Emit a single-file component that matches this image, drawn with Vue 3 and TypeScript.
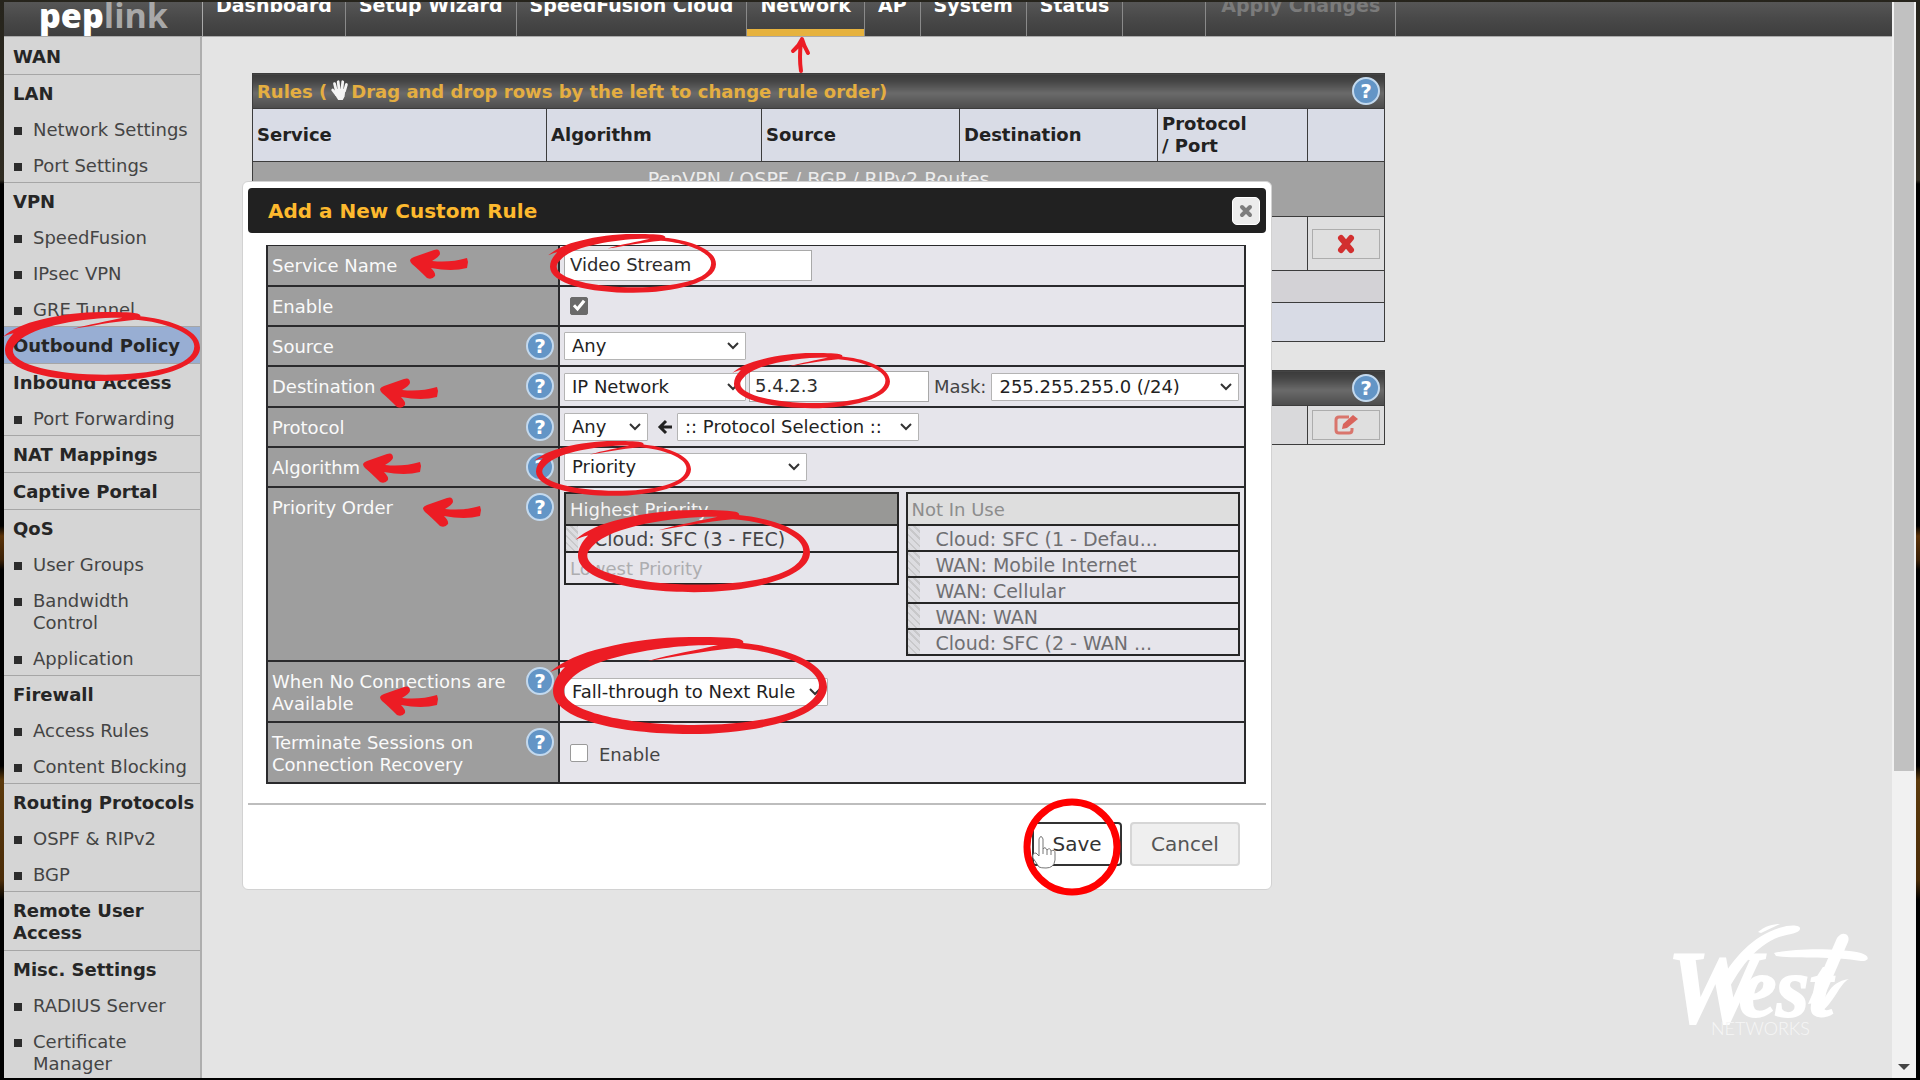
<script setup lang="ts">
import { ref } from 'vue'

interface MenuGroup {
  title: string
  active?: boolean
  items?: string[]
}

const menu: MenuGroup[] = [
  { title: 'WAN' },
  { title: 'LAN', items: ['Network Settings', 'Port Settings'] },
  { title: 'VPN', items: ['SpeedFusion', 'IPsec VPN', 'GRE Tunnel'] },
  { title: 'Outbound Policy', active: true },
  { title: 'Inbound Access', items: ['Port Forwarding'] },
  { title: 'NAT Mappings' },
  { title: 'Captive Portal' },
  { title: 'QoS', items: ['User Groups', 'Bandwidth Control', 'Application'] },
  { title: 'Firewall', items: ['Access Rules', 'Content Blocking'] },
  { title: 'Routing Protocols', items: ['OSPF & RIPv2', 'BGP'] },
  { title: 'Remote User Access' },
  { title: 'Misc. Settings', items: ['RADIUS Server', 'Certificate Manager'] },
]

const tabs = ['Dashboard', 'Setup Wizard', 'SpeedFusion Cloud', 'Network', 'AP', 'System', 'Status']
const activeTab = 'Network'

const unused = [
  'Cloud: SFC (1 - Defau...',
  'WAN: Mobile Internet',
  'WAN: Cellular',
  'WAN: WAN',
  'Cloud: SFC (2 - WAN ...',
]

const serviceName = ref('Video Stream')
const address = ref('5.4.2.3')
const enabled = ref(true)
const terminate = ref(false)

// Hand-drawn markers laid over the screen
const loops = [
  { x: 5, y: 312, w: 195 },
  { x: 550, y: 234, w: 166 },
  { x: 734, y: 353, w: 156 },
  { x: 536, y: 441, w: 155 },
  { x: 578, y: 510, w: 232 },
  { x: 553, y: 637, w: 274 },
]
const arrows = [
  { x: 410, y: 249 },
  { x: 380, y: 378 },
  { x: 363, y: 453 },
  { x: 423, y: 497 },
  { x: 380, y: 686 },
]
</script>

<template>
  <div class="screen">
    <div class="window">
      <div class="page">
        <header class="topbar">
          <a class="brand" href="#"><b>pep</b><span>link</span></a>
          <nav class="tabs">
            <a v-for="t in tabs" :key="t" href="#" :class="{ active: t === activeTab }">{{ t }}</a>
            <span class="spacer"></span>
            <a href="#" class="disabled">Apply Changes</a>
          </nav>
        </header>

        <div class="body">
          <aside class="sidebar">
            <section v-for="g in menu" :key="g.title" :class="{ active: g.active, lone: !g.items }">
              <a class="head" href="#">{{ g.title }}</a>
              <ul v-if="g.items">
                <li v-for="i in g.items" :key="i"><a href="#">{{ i }}</a></li>
              </ul>
            </section>
          </aside>

          <main class="main">
            <table class="rules">
              <colgroup>
                <col class="c-service" /><col class="c-algo" /><col class="c-addr" /><col class="c-addr" />
                <col class="c-proto" /><col class="c-act" />
              </colgroup>
              <thead>
                <tr class="bar">
                  <th colspan="6">
                    <div class="bar-row">
                      <span class="bar-text">Rules (<svg class="hand" viewBox="0 0 20 24" aria-hidden="true">
                        <g fill="none" stroke="#f4f4f4" stroke-width="3" stroke-linecap="round">
                          <path d="M6 13 4 5M9 12 8 3M12 12 13 3M15 13 17 6M6 17 2 12" />
                        </g>
                        <path d="M5 11 16 11 15 19 13 23H8L5 18Z" fill="#f4f4f4" />
                      </svg>Drag and drop rows by the left to change rule order)</span>
                      <button type="button" class="help" aria-label="Help">?</button>
                    </div>
                  </th>
                </tr>
                <tr class="cols">
                  <th>Service</th><th>Algorithm</th><th>Source</th><th>Destination</th><th>Protocol<br />/ Port</th><th></th>
                </tr>
              </thead>
              <tbody>
                <tr class="routes"><td colspan="6">PepVPN / OSPF / BGP / RIPv2 Routes</td></tr>
                <tr class="entry">
                  <td></td><td></td><td></td><td></td><td></td>
                  <td class="act">
                    <button type="button" class="tool" aria-label="Delete rule">
                      <svg width="20" height="20" viewBox="0 0 20 20"><path d="M5 4 15 16M15 4 5 16" stroke="#d22f2f" stroke-width="6" stroke-linecap="round" /></svg>
                    </button>
                  </td>
                </tr>
                <tr class="default"><td colspan="6"></td></tr>
                <tr class="add"><td colspan="6"></td></tr>
              </tbody>
            </table>

            <table class="rules">
              <colgroup>
                <col class="c-service" /><col class="c-algo" /><col class="c-addr" /><col class="c-addr" />
                <col class="c-proto" /><col class="c-act" />
              </colgroup>
              <tbody>
                <tr class="bar">
                  <th colspan="6">
                    <div class="bar-row">
                      <span></span>
                      <button type="button" class="help" aria-label="Help">?</button>
                    </div>
                  </th>
                </tr>
                <tr class="expert">
                  <td colspan="5"></td>
                  <td class="act">
                    <button type="button" class="tool" aria-label="Edit">
                      <svg width="24" height="22" viewBox="0 0 24 22" fill="none">
                        <path d="M15 3H5Q2 3 2 6V16Q2 19 5 19H15Q18 19 18 16V14" stroke="#d9756c" stroke-width="3" />
                        <path d="M8 15 9 10 19 1 24 5 13 14Z" fill="#d9645c" />
                      </svg>
                    </button>
                  </td>
                </tr>
              </tbody>
            </table>

            <div class="watermark">
              <svg viewBox="0 0 210 120" aria-label="West Networks">
                <text class="script"><tspan class="cap-w" x="0" y="98">W</tspan><tspan x="72" y="92">est</tspan></text>
                <g fill="#fff">
                  <path d="M50 62C66 34 86 12 112 4C124 0 134 1 133 5C133 9 122 10 112 13C88 22 72 44 56 76Z" />
                  <path d="M91 8C98 2 106 0 113 0L94 9Z" />
                  <path d="M107 29C128 24 172 24 194 29C203 32 203 37 194 37C166 32 130 35 109 32Z" />
                  <path d="M148 88C160 76 160 58 182 55C172 60 168 78 152 90Z" />
                  <path d="M141 80 170 14C175 6 184 10 181 18L155 78Z" />
                </g>
                <text class="sub" x="44" y="111">NETWORKS</text>
              </svg>
            </div>

            <form class="dialog" role="dialog" aria-labelledby="dlg-title" @submit.prevent>
              <div class="dlg-head">
                <h2 id="dlg-title">Add a New Custom Rule</h2>
                <button type="button" class="close" aria-label="Close">
                  <svg width="14" height="14" viewBox="0 0 14 14"><path d="M3 3 11 11M11 3 3 11" stroke="#7d7d7d" stroke-width="4" stroke-linecap="round" /></svg>
                </button>
              </div>

              <div class="fields">
                <div class="row">
                  <div class="label"><label for="svc">Service Name</label></div>
                  <div class="value"><input id="svc" v-model="serviceName" type="text" class="text wide" /></div>
                </div>
                <div class="row">
                  <div class="label"><label for="en">Enable</label></div>
                  <div class="value"><input id="en" v-model="enabled" type="checkbox" class="check" /></div>
                </div>
                <div class="row">
                  <div class="label"><label for="src">Source</label><button type="button" class="help" aria-label="Help">?</button></div>
                  <div class="value">
                    <span class="select w-type"><select id="src"><option>Any</option></select><svg viewBox="0 0 12 8"><path d="M1 1 6 6 11 1" /></svg></span>
                  </div>
                </div>
                <div class="row">
                  <div class="label"><label for="dst">Destination</label><button type="button" class="help" aria-label="Help">?</button></div>
                  <div class="value">
                    <span class="select w-type"><select id="dst"><option>IP Network</option></select><svg viewBox="0 0 12 8"><path d="M1 1 6 6 11 1" /></svg></span>
                    <input v-model="address" type="text" class="text addr" aria-label="Network address" />
                    <label for="mask" class="mask">Mask:</label>
                    <span class="select w-mask"><select id="mask"><option>255.255.255.0 (/24)</option></select><svg viewBox="0 0 12 8"><path d="M1 1 6 6 11 1" /></svg></span>
                  </div>
                </div>
                <div class="row">
                  <div class="label"><label for="proto">Protocol</label><button type="button" class="help" aria-label="Help">?</button></div>
                  <div class="value">
                    <span class="select w-any"><select id="proto"><option>Any</option></select><svg viewBox="0 0 12 8"><path d="M1 1 6 6 11 1" /></svg></span>
                    <svg class="left" width="16" height="16" viewBox="0 0 16 16" aria-hidden="true"><path d="M9 2 3 8 9 14M3 8H15" fill="none" stroke="#222" stroke-width="3" /></svg>
                    <span class="select w-proto"><select aria-label="Protocol selection"><option>:: Protocol Selection ::</option></select><svg viewBox="0 0 12 8"><path d="M1 1 6 6 11 1" /></svg></span>
                  </div>
                </div>
                <div class="row">
                  <div class="label"><label for="algo">Algorithm</label><button type="button" class="help" aria-label="Help">?</button></div>
                  <div class="value">
                    <span class="select w-algo"><select id="algo"><option>Priority</option></select><svg viewBox="0 0 12 8"><path d="M1 1 6 6 11 1" /></svg></span>
                  </div>
                </div>
                <div class="row order">
                  <div class="label"><span>Priority Order</span><button type="button" class="help" aria-label="Help">?</button></div>
                  <div class="value">
                    <ul class="list used">
                      <li class="cap">Highest Priority</li>
                      <li class="item">Cloud: SFC (3 - FEC)</li>
                      <li class="low">Lowest Priority</li>
                    </ul>
                    <ul class="list unused">
                      <li class="cap">Not In Use</li>
                      <li v-for="u in unused" :key="u" class="item">{{ u }}</li>
                    </ul>
                  </div>
                </div>
                <div class="row tall">
                  <div class="label"><label for="noconn">When No Connections are Available</label><button type="button" class="help" aria-label="Help">?</button></div>
                  <div class="value">
                    <span class="select w-fall"><select id="noconn"><option>Fall-through to Next Rule</option></select><svg viewBox="0 0 12 8"><path d="M1 1 6 6 11 1" /></svg></span>
                  </div>
                </div>
                <div class="row tall">
                  <div class="label"><span>Terminate Sessions on Connection Recovery</span><button type="button" class="help" aria-label="Help">?</button></div>
                  <div class="value">
                    <label class="tick"><input v-model="terminate" type="checkbox" class="check" /><span>Enable</span></label>
                  </div>
                </div>
              </div>

              <div class="dlg-foot">
                <button type="submit" class="btn save">Save</button>
                <button type="button" class="btn cancel">Cancel</button>
              </div>
            </form>
          </main>
        </div>
      </div>
      <div class="scrollbar"><div class="thumb"></div><div class="down"></div></div>
    </div>

    <svg class="marks" width="1920" height="1080" viewBox="0 0 1920 1080" aria-hidden="true">
      <defs>
        <path
          id="loop"
          fill-rule="evenodd"
          d="M-3 35C10 24 28 16 50 11C78 4 106 0 137 0C155 0 175 0 186 2C190 3 191 5 190 6C222 9 274 22 274 50C274 80 205 97 137 97C65 97 0 82 0 54C0 46 4 38 12 30C6 31 2 33-3 35ZM11 54C11 74 72 88 141 88C205 88 266 76 266 48C266 30 225 14 183 11C150 14 120 20 95 24C118 17 145 13 165 8C120 7 40 18 18 42C13 47 11 50 11 54Z"
        />
        <path id="arrow" d="M0 11Q1 9 4 8L24 1Q30-1 30 5Q29 8 22 12Q40 14 57 9L58 13 57 19Q42 23 21 19Q26 24 25 27Q22 31 17 29Q8 20 2 15Q0 13 0 11Z" />
      </defs>
      <g fill="#ec1c24">
        <use v-for="(l, i) in loops" :key="'l' + i" href="#loop" :transform="`translate(${l.x} ${l.y}) scale(${l.w / 274})`" />
        <use v-for="(a, i) in arrows" :key="'a' + i" href="#arrow" :x="a.x" :y="a.y" />
      </g>
      <path d="M801 71Q799 58 801 42M793 51Q799 46 802 39Q804 46 808 53" fill="none" stroke="#ec1c24" stroke-width="4" stroke-linecap="round" stroke-linejoin="round" />
      <path d="M1039 867 1033 858Q1032 853 1036 853L1039 856V839Q1041 834 1043 839V849Q1045 846 1047 850Q1050 847 1051 851Q1055 849 1055 853V860Q1054 868 1046 868Q1041 868 1039 867Z" fill="#fff" stroke="#777" />
      <path d="M1043 849V854M1047 850V855M1051 851V855" stroke="#777" />
      <circle cx="1072" cy="847" r="45" fill="none" stroke="#f00" stroke-width="7" />
    </svg>
  </div>
</template>

<style>
body {
  margin: 0;
  background: #000;
}
</style>

<style scoped>
* {
  box-sizing: border-box;
}
.screen {
  position: relative;
  height: 100vh;
  overflow: hidden;
  padding: 2px 4px;
  background: linear-gradient(180deg, #26241c 0, #302c22 180px, #000 184px, #000 526px, #5a3208 536px, #3a2006 560px, #000 570px, #000 766px, #5c3a0c 780px, #4a2c08 880px, #000 900px);
  font: 18px/22px "DejaVu Sans", Verdana, sans-serif;
  color: #444;
}
.window {
  display: flex;
  height: 100%;
  background: #e4e4e4;
  overflow: hidden;
}
.page {
  flex: 1;
  min-width: 0;
  display: flex;
  flex-direction: column;
}
a {
  color: inherit;
  text-decoration: none;
}
button,
input,
select {
  font: inherit;
  margin: 0;
}
ul {
  list-style: none;
  margin: 0;
  padding: 0;
}

/* top bar: scrolled partly out of view */
.topbar {
  display: flex;
  align-items: flex-end;
  flex: none;
  height: 35px;
  overflow: hidden;
  background: linear-gradient(#565656, #484848 50%, #3e3e3e);
  border-bottom: 1px solid #aaa;
}
.brand {
  flex: none;
  width: 198px;
  padding-left: 35px;
  font: 700 34px/42px "Open Sans", sans-serif;
  color: #fff;
}
.brand span {
  color: #a8a8a8;
}
.tabs {
  display: flex;
  flex: none;
  height: 62px;
  border-left: 1px solid #aaa;
  font-size: 19px;
  font-weight: 700;
  color: #fff;
}
.tabs > * {
  display: flex;
  align-items: center;
  padding: 0 13px;
  border-right: 1px solid #8a8a8a;
}
.tabs .active {
  box-shadow: inset 0 -7px #e6b23e;
}
.tabs .spacer {
  width: 83px;
}
.tabs .disabled {
  color: #7b7b7b;
  padding: 0 15px;
}

.body {
  display: flex;
  flex: 1;
  min-height: 0;
}
.sidebar {
  flex: none;
  width: 198px;
  padding-top: 1px;
  overflow: hidden;
  background: #d5d5d5;
  border-right: 2px solid #aeaeae;
}
.sidebar section {
  box-shadow: inset 0 -1px #a6a6a6;
}
.sidebar .head {
  display: block;
  padding: 8px 2px 6px 9px;
  font-weight: 700;
  color: #262626;
}
.sidebar .lone .head {
  padding-bottom: 7px;
}
.sidebar .active {
  background: #98aed3;
}
.sidebar li {
  position: relative;
  padding: 8px 24px 6px 29px;
}
.sidebar li a {
  display: block;
  margin-right: -24px;
  padding-right: 12px;
}
.sidebar li::before {
  content: "";
  position: absolute;
  left: 10px;
  top: 16px;
  width: 8px;
  height: 8px;
  background: #2c2c2c;
}

.main {
  position: relative;
  flex: 1;
  min-width: 0;
  padding: 36px 50px;
}
.rules {
  width: 100%;
  max-width: 1133px;
  table-layout: fixed;
  border-collapse: collapse;
  margin-bottom: 28px;
}
.rules th,
.rules td {
  padding: 0 4px;
  border: 1px solid #3c3c3c;
  text-align: left;
}
.c-service { width: 26%; }
.c-algo { width: 19%; }
.c-addr { width: 198px; }
.c-proto { width: 150px; }
.c-act { width: 77px; }
.bar th {
  height: 35px;
  background: linear-gradient(#3b3b3b, #454545 20%, #6a6a6a 55%, #4c4c4c);
  color: #e4ae41;
}
.bar-row {
  display: flex;
  align-items: center;
  justify-content: space-between;
}
.hand {
  width: 20px;
  height: 22px;
  margin: 0 1px 0 3px;
  vertical-align: -3px;
}
.cols th {
  height: 53px;
  background: #d9dce6;
  color: #222;
}
.routes td {
  height: 55px;
  padding-top: 6px;
  background: #a2a2a2;
  color: #ececec;
  font-size: 19px;
  text-align: center;
  vertical-align: top;
}
.entry td { height: 54px; background: #dbdbdd; }
.default td { height: 32px; background: #d3d2d6; }
.add td { height: 39px; background: #d8dbe5; }
.expert td { height: 39px; background: #d9d9db; }
.rules .act {
  background: #dededf;
}
.tool {
  display: flex;
  align-items: center;
  justify-content: center;
  width: 100%;
  height: 30px;
  padding: 0;
  border: 1px solid #adadad;
  background: #dfdfdf;
}
.help {
  display: flex;
  align-items: center;
  justify-content: center;
  flex: none;
  width: 28px;
  height: 28px;
  padding: 0;
  border: 2px solid #c3d9ee;
  border-radius: 50%;
  background: #6395c6;
  color: #fff;
  font-size: 20px;
  font-weight: 700;
}

.watermark {
  position: absolute;
  right: 0;
  bottom: 34px;
  width: 225px;
}
.watermark svg {
  display: block;
  width: 210px;
  height: 120px;
  overflow: visible;
}
.script {
  font: italic 700 84px "Liberation Serif", serif;
  fill: #fff;
  stroke: #fff;
  stroke-width: 2px;
}
.cap-w {
  font-size: 104px;
}
.sub {
  font: 300 18px Lato, sans-serif;
  fill: #f6f6f6;
}

.dialog {
  position: absolute;
  left: 40px;
  top: 144px;
  width: 1030px;
  max-width: 100%;
  padding: 6px 5px;
  border: 1px solid #d2d2d2;
  border-radius: 6px;
  background: #fff;
}
.dlg-head {
  display: flex;
  align-items: center;
  justify-content: space-between;
  height: 45px;
  padding: 0 6px 0 20px;
  border-radius: 4px;
  background: #212121;
}
.dlg-head h2 {
  margin: 0;
  font-size: 20px;
  color: #fdb92e;
}
.close {
  display: flex;
  align-items: center;
  justify-content: center;
  width: 28px;
  height: 28px;
  padding: 0;
  border: 1px solid #fff;
  border-radius: 5px;
  background: #ececec;
}
.fields {
  margin: 12px 20px 0 18px;
  border: 2px solid #2a2a2c;
  border-top-width: 1px;
  border-bottom: 0;
}
.row {
  display: flex;
  border-bottom: 2px solid #2a2a2c;
}
.label {
  display: flex;
  justify-content: space-between;
  align-items: flex-start;
  flex: none;
  width: 292px;
  min-height: 38px;
  padding: 5px 4px;
  border-right: 2px solid #2a2a2c;
  background: #9e9e9e;
  color: #fafafa;
}
.label > :first-child {
  padding-top: 4px;
}
.value {
  display: flex;
  align-items: center;
  flex: 1;
  min-width: 0;
  padding: 4px;
  background: #e6e5eb;
}
.text {
  height: 31px;
  padding: 0 5px 2px;
  border: 1px solid #a9a9a9;
  background: #fff;
  color: #2c2c2c;
}
.wide { width: 248px; }
.addr { width: 180px; margin-left: 3px; }
.mask { margin: 0 5px; }
.check {
  appearance: none;
  width: 18px;
  height: 18px;
  margin-left: 6px;
  border: 1px solid #9a9a9a;
  border-radius: 2px;
  background: #fff;
}
.check:checked {
  display: grid;
  place-items: center;
  border-color: #6a6a6a;
  background: #6a6a6a;
}
.check:checked::before {
  content: "";
  width: 14px;
  height: 14px;
  background: #fff;
  clip-path: polygon(6% 52%, 22% 38%, 38% 56%, 78% 6%, 96% 20%, 40% 88%);
}
.tick {
  display: flex;
  align-items: center;
  gap: 11px;
}
.tick span {
  padding-top: 4px;
}
.select {
  position: relative;
  display: inline-flex;
  height: 28px;
}
.select select {
  appearance: none;
  width: 100%;
  height: 28px;
  padding: 0 7px;
  border: 1px solid #b4b4b4;
  border-radius: 1px;
  background: #fff;
  color: #222;
}
.select svg {
  position: absolute;
  right: 7px;
  top: 10px;
  width: 12px;
  height: 8px;
  fill: none;
  stroke: #333;
  stroke-width: 2;
  pointer-events: none;
}
.w-type { width: 182px; }
.w-any { width: 84px; }
.w-proto { width: 242px; }
.w-mask { width: 248px; }
.w-algo { width: 243px; }
.w-fall { width: 264px; }
.left { margin: 0 4px 0 9px; }
.order .value {
  align-items: flex-start;
  gap: 7px;
}
.list {
  flex: 1;
  border: 2px solid #262626;
  color: #6f6f72;
}
.list li + li {
  border-top: 2px solid #262626;
}
.list .cap {
  height: 30px;
  padding: 5px 4px;
  background: #dedede;
  color: #8d8d8d;
}
.used .cap {
  background: #989896;
  color: #f4f4f4;
}
.list .item {
  height: 26px;
  padding: 2px 0 0 28px;
  font-size: 19px;
  background: repeating-linear-gradient(45deg, #c8c8ca 0 2px, #dcdce0 2px 5px) 0 0 / 12px 100% no-repeat, #e6e5eb;
}
.list.used .item {
  height: 27px;
  color: #454548;
}
.list .low {
  height: 32px;
  padding: 5px 4px;
  color: #adadb0;
}
.tall .label {
  min-height: 59px;
}
.dlg-foot {
  display: flex;
  justify-content: flex-end;
  gap: 8px;
  margin-top: 19px;
  padding: 17px 26px 17px;
  border-top: 2px solid #bdbdbd;
}
.btn {
  height: 44px;
  padding: 0;
  border-radius: 4px;
  font-size: 20px;
}
.save {
  width: 90px;
  border: 2px solid #333;
  background: #fff;
  color: #333;
}
.cancel {
  width: 110px;
  border: 2px solid #d6d6d6;
  background: #efefef;
  color: #555;
}

.scrollbar {
  display: flex;
  flex-direction: column;
  align-items: center;
  justify-content: space-between;
  flex: none;
  width: 24px;
  padding-bottom: 8px;
  background: #f1f1f1;
}
.thumb {
  width: 20px;
  height: 72%;
  background: #c1c1c1;
}
.down {
  border: 6px solid transparent;
  border-top-color: #444;
  border-bottom: 0;
}
.marks {
  position: absolute;
  left: 0;
  top: 0;
  pointer-events: none;
}
</style>
